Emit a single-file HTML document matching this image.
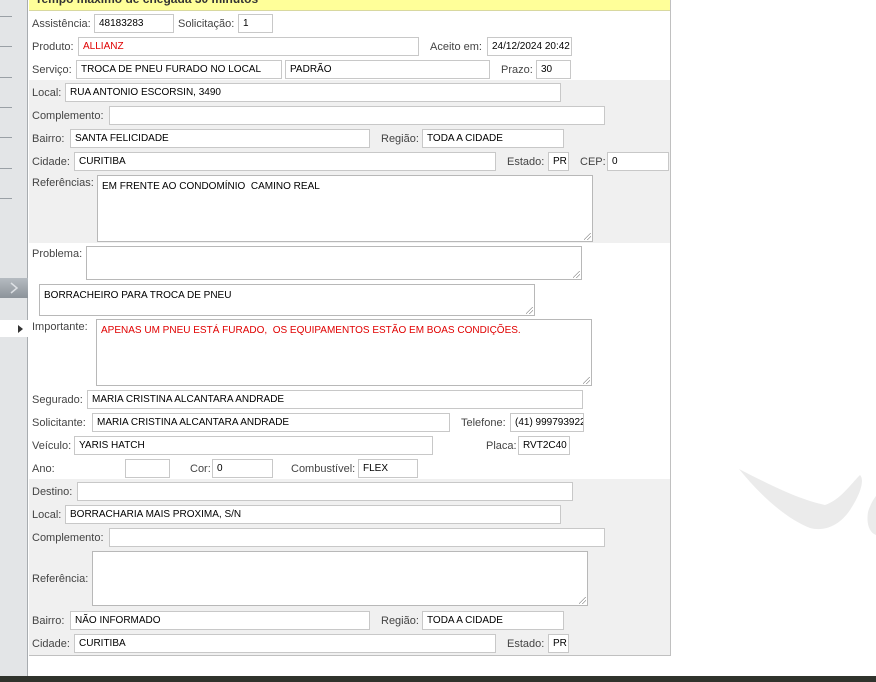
<!DOCTYPE html>
<html><head><meta charset="utf-8"><style>
*{margin:0;padding:0;box-sizing:border-box}
body{width:876px;height:682px;position:relative;overflow:hidden;background:#fff;font-family:"Liberation Sans",Tahoma,sans-serif;font-size:11px;color:#444}
.a{position:absolute}
.l{position:absolute;line-height:20px;white-space:nowrap;color:#444}
.b{position:absolute;height:19px;border:1px solid #c8c8c8;background:#fff;font-size:10px;color:#000;line-height:18px;padding-left:4px;white-space:nowrap;overflow:hidden}
.t{position:absolute;border:1px solid #b8b8b8;background:#fff;font-size:10px;color:#000;padding:5px 0 0 4px;white-space:nowrap;overflow:hidden}
.t::after{content:"";position:absolute;right:1px;bottom:1px;width:7px;height:7px;background:linear-gradient(135deg,transparent 45%,#999 45%,#999 52%,transparent 52%,transparent 70%,#999 70%,#999 77%,transparent 77%)}
.g{background:#f0f0f0}
.sl{position:absolute;left:0;width:12px;height:1px;background:#9aa0a6}
</style></head><body>
<div class="a" style="left:0;top:0;width:28px;height:676px;background:#e3e5e7;border-right:1px solid #a8acb0"></div>
<div class="sl" style="top:16px"></div><div class="sl" style="top:46px"></div><div class="sl" style="top:77px"></div><div class="sl" style="top:107px"></div><div class="sl" style="top:137px"></div><div class="sl" style="top:168px"></div><div class="sl" style="top:198px"></div>
<div class="a" style="left:0;top:278px;width:28px;height:20px;background:linear-gradient(#b5bbc1,#8c939a)"></div>
<svg class="a" style="left:9px;top:282px" width="10" height="12"><path d="M2 1 L8 6 L2 11" fill="none" stroke="#dde0e4" stroke-width="1.5"/></svg>
<div class="a" style="left:0;top:320px;width:28px;height:17px;background:#fff"></div>
<div class="a" style="left:18px;top:325px;width:0;height:0;border-left:5px solid #333;border-top:4px solid transparent;border-bottom:4px solid transparent"></div>
<div class="a" style="left:29px;top:0;width:642px;height:656px;border-right:1px solid #c0c0c0;border-bottom:1px solid #c0c0c0"></div>
<div class="a" style="left:29px;top:0;width:641px;height:11px;background:#ffff99;border-bottom:1px solid #d8d8a0;overflow:hidden"><div style="font-weight:bold;color:#333;font-size:12px;position:absolute;left:6px;top:-8px">Tempo máximo de chegada 30 minutos</div></div>
<div class="a g" style="left:29px;top:80px;width:641px;height:163px"></div>
<div class="a g" style="left:29px;top:479px;width:641px;height:176px"></div>
<svg class="a" style="left:0;top:0" width="876" height="682"><path d="M739 469 C770 485 800 500 825 505 C840 500 850 485 860 475 C865 480 860 495 850 510 C840 525 825 532 810 528 C785 518 760 495 739 469Z" fill="#ebebeb"/><path d="M868 512 C871 502 876 496 876 496 L876 535 C870 533 866 525 868 512Z" fill="#ebebeb"/></svg>
<div class="l" style="left:32px;top:14px">Assistência:</div><div class="b" style="left:94px;top:14px;width:80px">48183283</div>
<div class="l" style="left:178px;top:14px">Solicitação:</div><div class="b" style="left:238px;top:14px;width:35px">1</div>
<div class="l" style="left:32px;top:37px">Produto:</div><div class="b" style="left:78px;top:37px;width:341px;color:#e00000">ALLIANZ</div>
<div class="l" style="left:430px;top:37px">Aceito em:</div><div class="b" style="left:487px;top:37px;width:85px">24/12/2024 20:42</div>
<div class="l" style="left:32px;top:60px">Serviço:</div><div class="b" style="left:76px;top:60px;width:206px">TROCA DE PNEU FURADO NO LOCAL</div>
<div class="b" style="left:285px;top:60px;width:205px">PADRÃO</div>
<div class="l" style="left:501px;top:60px">Prazo:</div><div class="b" style="left:536px;top:60px;width:35px">30</div>
<div class="l" style="left:32px;top:83px">Local:</div><div class="b" style="left:65px;top:83px;width:496px">RUA ANTONIO ESCORSIN, 3490</div>
<div class="l" style="left:32px;top:106px">Complemento:</div><div class="b" style="left:109px;top:106px;width:496px"></div>
<div class="l" style="left:32px;top:129px">Bairro:</div><div class="b" style="left:70px;top:129px;width:300px">SANTA FELICIDADE</div>
<div class="l" style="left:381px;top:129px">Região:</div><div class="b" style="left:422px;top:129px;width:142px">TODA A CIDADE</div>
<div class="l" style="left:32px;top:152px">Cidade:</div><div class="b" style="left:74px;top:152px;width:422px">CURITIBA</div>
<div class="l" style="left:507px;top:152px">Estado:</div><div class="b" style="left:548px;top:152px;width:21px">PR</div>
<div class="l" style="left:580px;top:152px">CEP:</div><div class="b" style="left:607px;top:152px;width:62px">0</div>
<div class="l" style="left:32px;top:173px">Referências:</div><div class="t" style="left:97px;top:175px;width:496px;height:67px">EM FRENTE AO CONDOMÍNIO&nbsp; CAMINO REAL</div>
<div class="l" style="left:32px;top:244px">Problema:</div><div class="t" style="left:86px;top:246px;width:496px;height:34px"></div>
<div class="t" style="left:39px;top:284px;width:496px;height:32px">BORRACHEIRO PARA TROCA DE PNEU</div>
<div class="l" style="left:32px;top:317px">Importante:</div><div class="t" style="left:96px;top:319px;width:496px;height:67px;color:#e00000">APENAS UM PNEU ESTÁ FURADO,&nbsp; OS EQUIPAMENTOS ESTÃO EM BOAS CONDIÇÕES.</div>
<div class="l" style="left:32px;top:390px">Segurado:</div><div class="b" style="left:87px;top:390px;width:496px">MARIA CRISTINA ALCANTARA ANDRADE</div>
<div class="l" style="left:32px;top:413px">Solicitante:</div><div class="b" style="left:92px;top:413px;width:358px">MARIA CRISTINA ALCANTARA ANDRADE</div>
<div class="l" style="left:461px;top:413px">Telefone:</div><div class="b" style="left:510px;top:413px;width:74px">(41) 999793922</div>
<div class="l" style="left:32px;top:436px">Veículo:</div><div class="b" style="left:74px;top:436px;width:359px">YARIS HATCH</div>
<div class="l" style="left:486px;top:436px">Placa:</div><div class="b" style="left:518px;top:436px;width:52px">RVT2C40</div>
<div class="l" style="left:32px;top:459px">Ano:</div><div class="b" style="left:125px;top:459px;width:45px"></div>
<div class="l" style="left:190px;top:459px">Cor:</div><div class="b" style="left:212px;top:459px;width:61px">0</div>
<div class="l" style="left:291px;top:459px">Combustível:</div><div class="b" style="left:358px;top:459px;width:60px">FLEX</div>
<div class="l" style="left:32px;top:482px">Destino:</div><div class="b" style="left:77px;top:482px;width:496px"></div>
<div class="l" style="left:32px;top:505px">Local:</div><div class="b" style="left:65px;top:505px;width:496px">BORRACHARIA MAIS PROXIMA, S/N</div>
<div class="l" style="left:32px;top:528px">Complemento:</div><div class="b" style="left:109px;top:528px;width:496px"></div>
<div class="l" style="left:32px;top:569px">Referência:</div><div class="t" style="left:92px;top:551px;width:496px;height:55px"></div>
<div class="l" style="left:32px;top:611px">Bairro:</div><div class="b" style="left:70px;top:611px;width:300px">NÃO INFORMADO</div>
<div class="l" style="left:381px;top:611px">Região:</div><div class="b" style="left:422px;top:611px;width:142px">TODA A CIDADE</div>
<div class="l" style="left:32px;top:634px">Cidade:</div><div class="b" style="left:74px;top:634px;width:422px">CURITIBA</div>
<div class="l" style="left:507px;top:634px">Estado:</div><div class="b" style="left:548px;top:634px;width:21px">PR</div>
<div class="a" style="left:0;top:676px;width:876px;height:6px;background:#30332c"></div>
</body></html>
